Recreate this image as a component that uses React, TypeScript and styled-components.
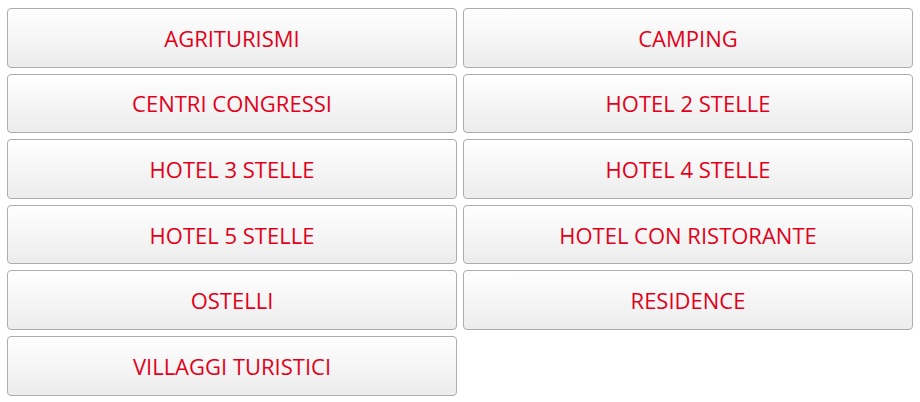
import React from "react";
import styled, { createGlobalStyle } from "styled-components";

const Global = createGlobalStyle`
  html, body { margin: 0; padding: 0; background: #ffffff; }
  body { font-family: "Open Sans", "Liberation Sans", sans-serif; }
`;

const Grid = styled.div`
  display: grid;
  grid-template-columns: 450px 450px;
  grid-auto-rows: 59.6px;
  column-gap: 6px;
  row-gap: 6px;
  padding: 8px 7px 0 7px;
`;

const Button = styled.a`
  display: flex;
  align-items: center;
  justify-content: center;
  box-sizing: border-box;
  border: 1px solid #acacac;
  border-radius: 4px;
  background: linear-gradient(to bottom, #ffffff 0%, #ececec 100%);
  color: #e2001a;
  font-family: "Open Sans", "Liberation Sans", sans-serif;
  font-size: 22px;
  text-decoration: none;
  text-transform: uppercase;
  cursor: pointer;
`;

const items = [
  "AGRITURISMI",
  "CAMPING",
  "CENTRI CONGRESSI",
  "HOTEL 2 STELLE",
  "HOTEL 3 STELLE",
  "HOTEL 4 STELLE",
  "HOTEL 5 STELLE",
  "HOTEL CON RISTORANTE",
  "OSTELLI",
  "RESIDENCE",
  "VILLAGGI TURISTICI",
];

export default function App() {
  return (
    <>
      <Global />
      <Grid>
        {items.map((t) => (
          <Button key={t}>{t}</Button>
        ))}
      </Grid>
    </>
  );
}
